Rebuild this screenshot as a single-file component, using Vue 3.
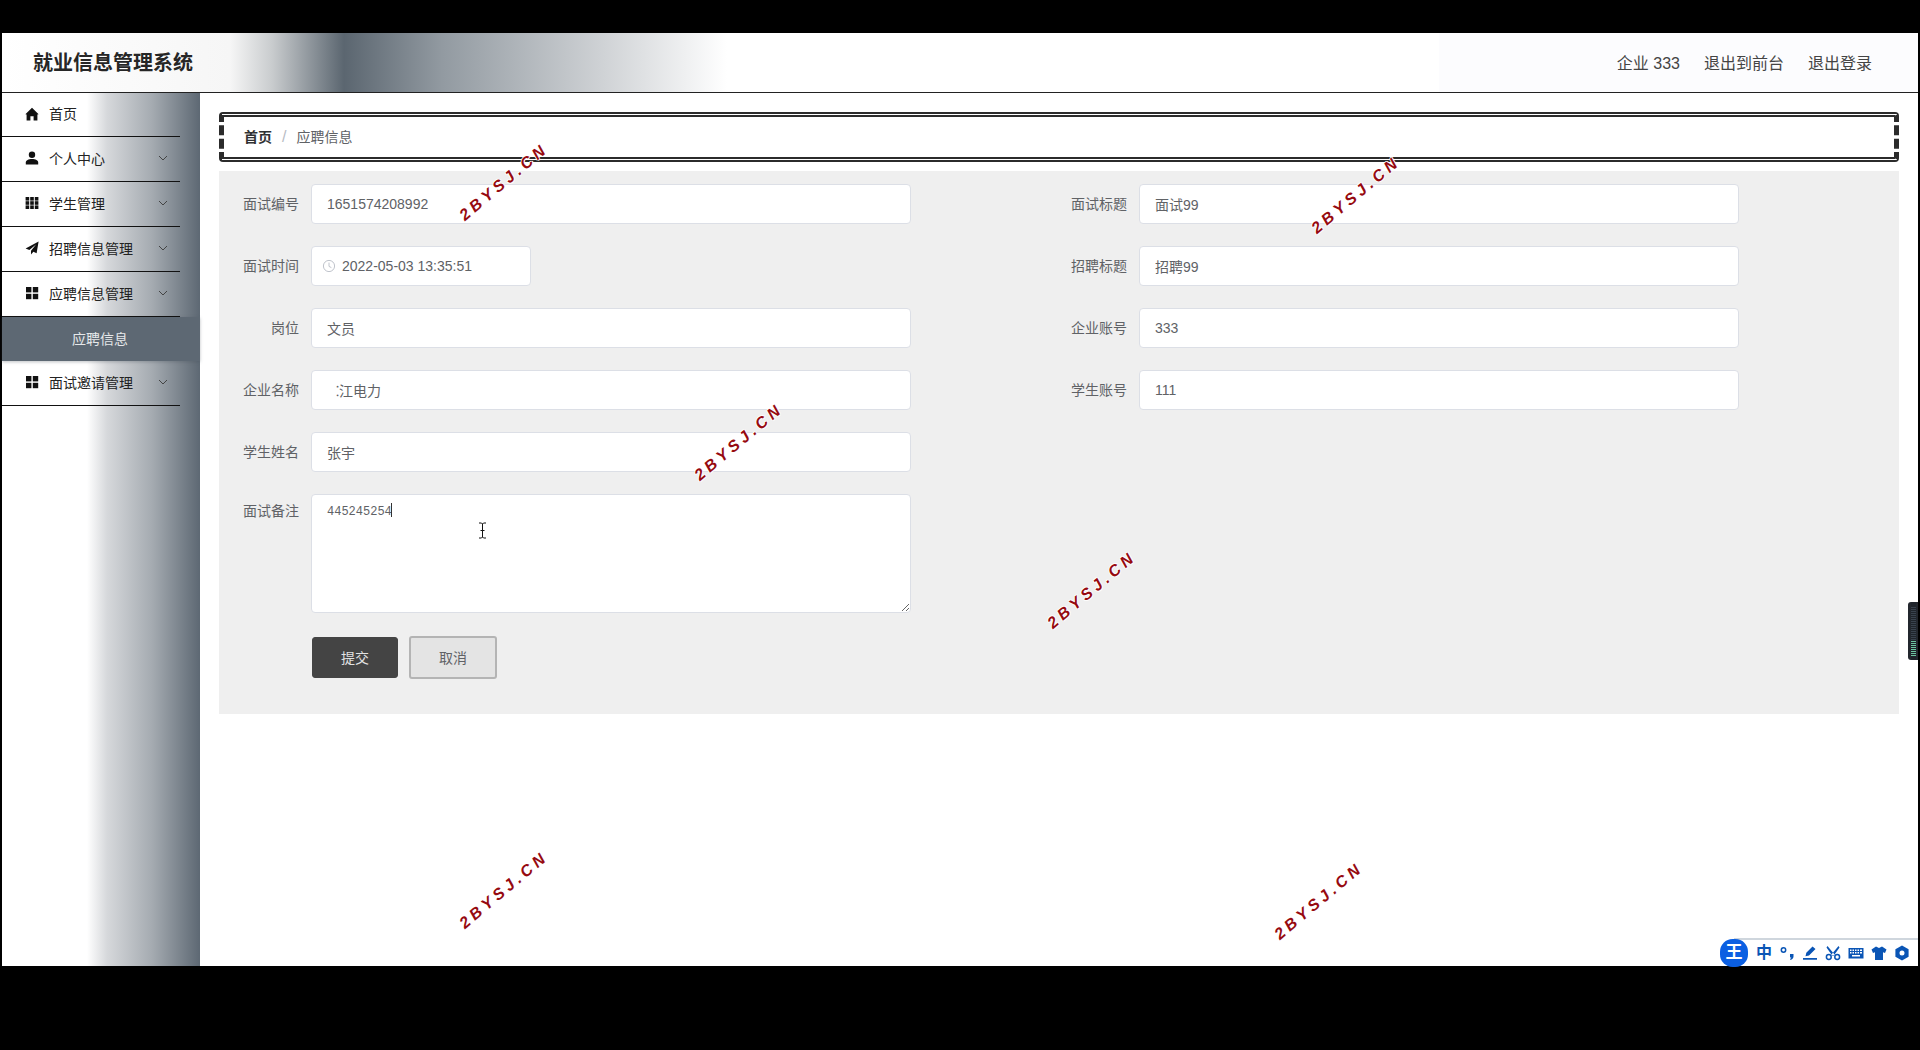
<template>
  <div class="frame">
    <header class="topbar">
      <div class="brand">就业信息管理系统</div>
      <div class="top-links">
        <span>企业 333</span>
        <span>退出到前台</span>
        <span>退出登录</span>
      </div>
    </header>

    <div class="body">
      <aside class="sidebar">
        <template v-for="item in menu" :key="item.name">
          <div class="menu-item">
            <svg class="menu-icon" viewBox="0 0 14 14">
              <template v-if="item.icon === 'home'">
                <path d="M7 .8 13.6 7.2 12.4 7.6V13.4H8.6V9.2H5.4V13.4H1.6V7.6L.4 7.2Z" />
              </template>
              <template v-else-if="item.icon === 'user'">
                <circle cx="7" cy="3.8" r="3.2" />
                <path d="M.8 13.4V11.6C.8 9.2 3.4 8 7 8s6.2 1.2 6.2 3.6v1.8Z" />
              </template>
              <template v-else-if="item.icon === 'grid3'">
                <rect v-for="c in grid3" :key="c[0] + '-' + c[1]" :x="c[0]" :y="c[1]" width="3.6" height="3.6" />
              </template>
              <template v-else-if="item.icon === 'send'">
                <path d="M13.6.6 .6 7.4 4.4 9 11 3.4 6 9.8V13.6L8.4 10.8 11.6 12.2Z" />
              </template>
              <template v-else>
                <rect x="1" y="1" width="5.4" height="5.4" />
                <rect x="7.8" y="1" width="5.4" height="5.4" />
                <rect x="1" y="7.8" width="5.4" height="5.4" />
                <rect x="7.8" y="7.8" width="5.4" height="5.4" />
              </template>
            </svg>
            <span>{{ item.name }}</span>
            <svg v-if="item.arrow" class="chevron" viewBox="0 0 10 6">
              <path d="M1 1l4 4 4-4" />
            </svg>
          </div>
          <div v-if="item.sub" class="sub-item">{{ item.sub }}</div>
        </template>
      </aside>

      <main class="main">
        <div class="crumb">
          <b>首页</b>
          <i>/</i>
          <span>应聘信息</span>
        </div>

        <section class="panel">
          <div class="col">
            <div class="row">
              <label>面试编号</label>
              <input class="field" readonly value="1651574208992" />
            </div>
            <div class="row">
              <label>面试时间</label>
              <div class="date">
                <svg class="clock" viewBox="0 0 14 14">
                  <circle cx="7" cy="7" r="5.6" />
                  <path d="M7 3.6V7.4L9.4 8.6" />
                </svg>
                <input class="field date-input" readonly value="2022-05-03 13:35:51" />
              </div>
            </div>
            <div class="row">
              <label>岗位</label>
              <input class="field" readonly value="文员" />
            </div>
            <div class="row">
              <label>企业名称</label>
              <input class="field company" readonly value="⁚江电力" />
            </div>
            <div class="row">
              <label>学生姓名</label>
              <input class="field" readonly value="张宇" />
            </div>
            <div class="row row-top">
              <label>面试备注</label>
              <div class="note">
                <textarea readonly>445245254</textarea>
                <span class="caret"></span>
              </div>
            </div>
            <div class="actions">
              <button class="btn-save">提交</button>
              <button class="btn-cancel">取消</button>
            </div>
          </div>

          <div class="col">
            <div v-for="r in rightRows" :key="r.label" class="row">
              <label>{{ r.label }}</label>
              <input class="field" readonly :value="r.value" />
            </div>
          </div>
        </section>
      </main>
    </div>

    <svg class="ibeam" viewBox="0 0 9 17">
      <path d="M1 1h2.5l1 1 1-1H8M4.5 2v13M1 16h2.5l1-1 1 1H8M2.5 8.500h4" />
    </svg>

    <span
      v-for="m in marks"
      :key="m.x"
      class="mark"
      :style="{ left: m.x + 'px', top: m.y + 'px' }"
    >2BYSJ.CN</span>

    <div class="meter"></div>

    <div class="ime">
      <span class="ime-logo">王</span>
      <span class="ime-zh">中</span>
      <svg class="ime-icon" viewBox="0 0 16 16">
        <circle cx="4.500" cy="5" r="2.200" class="hollow" />
        <path d="M11 9h3.500v2.500C14.500 13.500 13 14.500 11.500 15l-.5-1c.8-.4 1.200-.8 1.300-1.500H11Z" />
      </svg>
      <svg class="ime-icon" viewBox="0 0 16 16">
        <path d="M10.500 1.500 13.500 4 7 10.500l-3.500.8.800-3.500ZM1 13h14v1.800H1Z" />
      </svg>
      <svg class="ime-icon" viewBox="0 0 16 16">
        <circle cx="3.800" cy="12" r="2.400" class="hollow" />
        <circle cx="12.200" cy="12" r="2.400" class="hollow" />
        <path d="M2.500 1 9.500 9.500 7.500 11 1.500 2.500ZM13.500 1 6.500 9.500 8.500 11l6-8.500Z" />
      </svg>
      <svg class="ime-icon" viewBox="0 0 16 16">
        <path fill-rule="evenodd" d="M.5 3h15v10.500H.5ZM2 4.500V6h1.500V4.500Zm2.500 0V6H6V4.500Zm2.500 0V6h1.500V4.500Zm2.500 0V6H11V4.500Zm2.500 0V6H14V4.500ZM2 7v1.500h1.500V7Zm2.500 0v1.500H6V7ZM7 7v1.500h1.500V7Zm2.500 0v1.500H11V7ZM12 7v1.500h2V7ZM4 10v1.500h8V10Z" />
      </svg>
      <svg class="ime-icon" viewBox="0 0 16 16">
        <path d="M5 1.500 8 3l3-1.500 4.500 3-1.500 3.500-2-.8V15H4V7.200l-2 .8L.5 4.500Z" />
      </svg>
      <svg class="ime-icon" viewBox="0 0 16 16">
        <path fill-rule="evenodd" d="M8 .5 14.600 4.200v7.600L8 15.500 1.400 11.800V4.200ZM8 5.500A2.500 2.500 0 1 0 8 10.500 2.500 2.500 0 1 0 8 5.500Z" />
      </svg>
    </div>
  </div>
</template>

<script setup>
const menu = [
  { name: "首页", icon: "home" },
  { name: "个人中心", icon: "user", arrow: true },
  { name: "学生管理", icon: "grid3", arrow: true },
  { name: "招聘信息管理", icon: "send", arrow: true },
  { name: "应聘信息管理", icon: "grid2", arrow: true, sub: "应聘信息" },
  { name: "面试邀请管理", icon: "grid2", arrow: true },
];

const grid3 = [];
for (const x of [0.6, 5.2, 9.8]) {
  for (const y of [1, 5.2, 9.4]) grid3.push([x, y]);
}

const rightRows = [
  { label: "面试标题", value: "面试99" },
  { label: "招聘标题", value: "招聘99" },
  { label: "企业账号", value: "333" },
  { label: "学生账号", value: "111" },
];

// watermark centres over the recording
const marks = [
  { x: 504, y: 182 },
  { x: 1356, y: 195 },
  { x: 739, y: 442 },
  { x: 1092, y: 590 },
  { x: 504, y: 890 },
  { x: 1319, y: 901 },
];
</script>

<style>
html,
body {
  margin: 0;
  background: #000;
}
</style>

<style scoped>
.frame {
  position: relative;
  box-sizing: border-box;
  width: 1920px;
  height: 1050px;
  padding: 33px 2px 84px;
  background: #000;
  overflow: hidden;
  font-family: "Liberation Sans", "Noto Sans CJK SC", sans-serif;
  font-size: 14px;
  color: #606266;
}

.topbar {
  display: flex;
  align-items: center;
  justify-content: space-between;
  box-sizing: border-box;
  height: 60px;
  padding: 0 46px 2px 31px;
  border-bottom: 1px solid #222;
  background:
    linear-gradient(90deg, #fff 0, #f6f6f6 228px, #c9ccce 270px, #5b6670 342px, #929aa1 440px, #cfd2d5 600px, #fff 725px, #fff 1437px, #fcfcfe 1437px, #fcfcfe 1916px);
}

.brand {
  font-size: 20px;
  font-weight: 700;
  color: #262626;
}

.top-links {
  display: flex;
  gap: 24px;
  font-size: 16px;
  color: #444;
}

.body {
  display: flex;
  height: 873px;
  background: #fff;
}

.sidebar {
  flex: none;
  width: 198px;
  background: linear-gradient(90deg, #fff 0, #fff 85px, #d6d8db 105px, #a5abb1 150px, #5d6873 198px);
}

.menu-item {
  position: relative;
  display: flex;
  align-items: center;
  box-sizing: border-box;
  width: 178px;
  height: 45px;
  padding: 0 0 3px 23px;
  border-bottom: 1px solid #111;
  color: #222;
}

.menu-item:first-child {
  height: 44px;
}

.menu-icon {
  flex: none;
  width: 14px;
  height: 14px;
  margin: 1px 10px 0 0;
  fill: #111;
}

.chevron {
  position: absolute;
  right: 12px;
  top: 18px;
  width: 10px;
  height: 6px;
  fill: none;
  stroke: #444;
  stroke-width: 1;
}

.sub-item {
  height: 44px;
  line-height: 44px;
  padding-left: 70px;
  background: #5d6873;
  color: #e6e8ea;
  box-shadow: 0 1px 3px rgba(70, 80, 90, 0.35);
}

.main {
  flex: 1;
  padding: 19px 20px 0 19px;
}

.crumb {
  display: flex;
  align-items: center;
  box-sizing: border-box;
  height: 50px;
  padding: 0 0 2px 20px;
  border-width: 5px;
  border-style: double dashed;
  border-color: #2b2b2b;
  border-radius: 4px;
  background: #fff;
}

.crumb b {
  color: #303133;
}

.crumb i {
  margin: 2px 10px 0;
  font-size: 16px;
  font-style: normal;
  color: #b8bcc4;
}

.panel {
  display: flex;
  box-sizing: border-box;
  height: 543px;
  margin-top: 9px;
  padding: 13px 12px 0;
  background: #efefef;
}

.col {
  display: flex;
  flex-direction: column;
  gap: 22px;
  width: 828px;
}

.row {
  display: flex;
  align-items: center;
}

.row-top {
  align-items: flex-start;
}

.row label {
  flex: none;
  width: 68px;
  margin: 0 12px 2px 0;
  text-align: right;
}

.row-top label {
  padding-top: 6px;
}

.field {
  box-sizing: border-box;
  width: 600px;
  height: 40px;
  padding: 0 15px;
  border: 1px solid #dcdfe6;
  border-radius: 4px;
  background: #fff;
  font: inherit;
  color: #606266;
  outline: none;
}

.company {
  padding-left: 24px;
}

.date {
  position: relative;
  width: 220px;
}

.date-input {
  width: 220px;
  padding-left: 30px;
}

.clock {
  position: absolute;
  left: 11px;
  top: 13px;
  width: 14px;
  height: 14px;
  fill: none;
  stroke: #c0c4cc;
  stroke-width: 1;
}

.note {
  position: relative;
  width: 600px;
  height: 119px;
}

.note textarea {
  display: block;
  box-sizing: border-box;
  width: 600px;
  height: 119px;
  padding: 8px 15px;
  border: 1px solid #dcdfe6;
  border-radius: 4px;
  background: #fff;
  font-family: "Liberation Mono", monospace;
  font-size: 12px;
  line-height: 18px;
  color: #606266;
  outline: none;
}

.caret {
  position: absolute;
  left: 80px;
  top: 9px;
  width: 1px;
  height: 14px;
  background: #333;
}

.actions {
  display: flex;
  align-items: center;
  gap: 11px;
  margin: 1px 0 0 81px;
}

.actions button {
  box-sizing: border-box;
  padding: 0 0 2px;
  font: inherit;
  border-radius: 3px;
}

.btn-save {
  width: 86px;
  height: 41px;
  border: 1px solid #444;
  background: #444;
  color: #e2e2e2;
}

.btn-cancel {
  width: 88px;
  height: 43px;
  border: 2px solid #b4b4b4;
  background: #e4e4e4;
  color: #606266;
}

.ibeam {
  position: absolute;
  left: 478px;
  top: 522px;
  width: 9px;
  height: 17px;
  fill: none;
  stroke: #111;
  stroke-width: 1;
}

.mark {
  position: absolute;
  transform: translate(-50%, -50%) rotate(-40deg);
  font-size: 16px;
  font-weight: 700;
  font-style: italic;
  letter-spacing: 4px;
  white-space: nowrap;
  color: #960a10;
  text-shadow: 1px 0 #fff, -1px 0 #fff, 0 1px #fff, 0 -1px #fff;
}

.meter {
  position: absolute;
  right: 2px;
  top: 602px;
  box-sizing: border-box;
  width: 10px;
  height: 58px;
  border-radius: 3px 0 0 3px;
  background:
    repeating-linear-gradient(0deg, transparent 0 1px, #1f242b 1px 2px),
    linear-gradient(0deg, #1f242b 0 4px, #6cc49e 4px 20px, #39424d 20px 54px, #1f242b 54px);
  box-shadow: inset 3px 0 0 #23272e, inset -2px 0 0 #23272e;
}

.ime {
  position: absolute;
  right: 2px;
  top: 938px;
  display: flex;
  align-items: center;
  box-sizing: border-box;
  width: 184px;
  height: 28px;
  padding-left: 22px;
  border-top: 2px solid #cfd6dd;
  background: #fff;
  color: #0a55b5;
}

.ime-logo {
  position: absolute;
  left: -14px;
  top: -1px;
  width: 28px;
  height: 28px;
  border-radius: 45%;
  background: #0b5fe2;
  color: #fff;
  font-size: 17px;
  font-weight: 700;
  line-height: 27px;
  text-align: center;
}

.ime-zh {
  width: 16px;
  margin-right: 7px;
  font-size: 16px;
  font-weight: 700;
  line-height: 16px;
  text-align: center;
}

.ime-icon {
  flex: none;
  width: 16px;
  height: 16px;
  margin-right: 7px;
  fill: #0a55b5;
}

.ime-icon .hollow {
  fill: none;
  stroke: #0a55b5;
  stroke-width: 1.500;
}
</style>
